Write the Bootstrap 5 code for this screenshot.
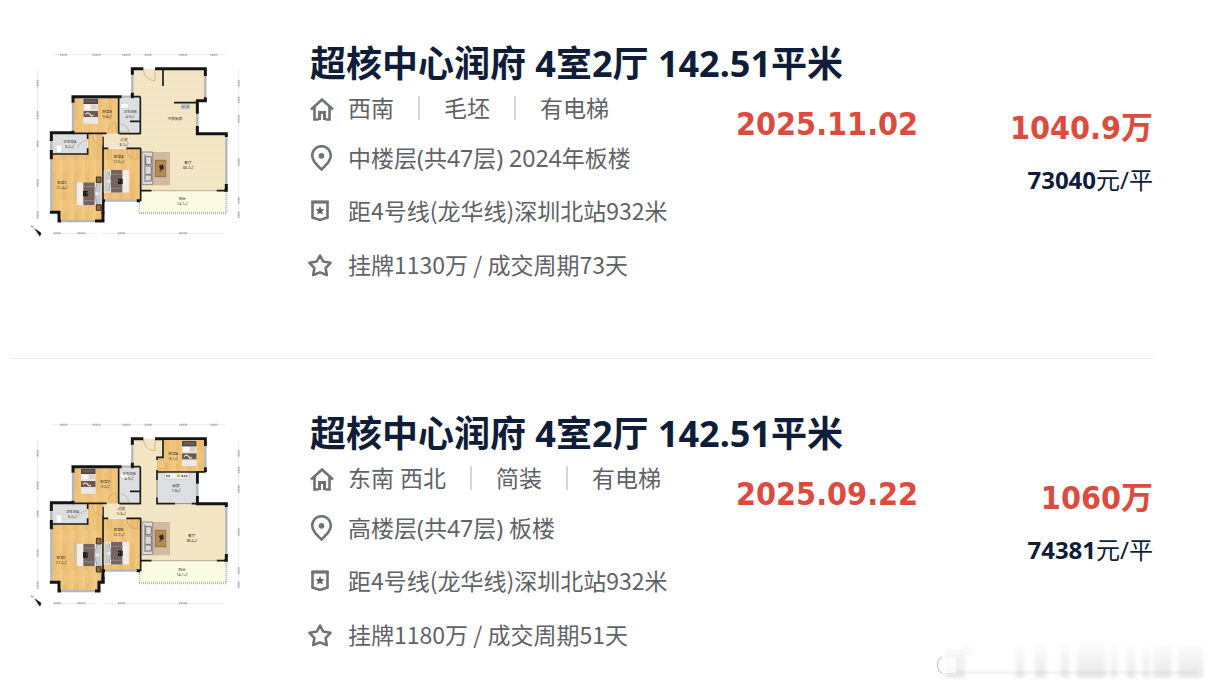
<!DOCTYPE html>
<html lang="zh-CN">
<head>
<meta charset="utf-8">
<meta name="viewport" content="width=device-width, initial-scale=1">
<title>超核中心润府 成交记录</title>
<link href="https://cdn.jsdelivr.net/npm/bootstrap@5.3.0/dist/css/bootstrap.min.css" rel="stylesheet">
<style>
  :root { --ink: #0f1d38; --soft: #5f6266; --deal: #db4c3f; }
  body { font-family: "Noto Sans", "Noto Sans CJK SC", sans-serif; color: var(--ink); background: #fff; }
  .deal-list { padding: 0 62px 0 10px; }
  .deal { padding: 55px 0 66px; border-bottom: 1px solid #ececec; }
  .deal:first-child { padding-top: 44px; }
  .deal:last-child { border-bottom: 0; padding-bottom: 0; }
  .plan-col { width: 298px; padding-left: 15px; }
  .plan { width: 220px; height: 205px; display: block; margin-top: -4px; }
  .deal-title { font-size: 36px; line-height: 40px; font-weight: 700; padding-left: 2px; }
  .facts li { height: 54px; gap: 14px; font-size: 23px; line-height: 32px; color: var(--soft); }
  .facts li:first-child { height: 47px; }
  .facts li:nth-child(2) { height: 53px; }
  .facts .plain-num { font-family: "Noto Sans CJK SC", sans-serif; padding-bottom: 2px; }
  .ico { width: 26px; height: 26px; fill: none; stroke: #707376; stroke-width: 2.6; }
  .sep { width: 2px; height: 24px; background: #d6d6d6; margin: 0 24px; }
  .info-col { width: 428px; }
  .date-col { padding-top: 60px; }
  .price-col { padding-top: 64px; }
  .big-num { font: 700 32px/40px "DejaVu Sans Condensed", "Noto Sans CJK SC", sans-serif; color: var(--deal); }
  .unit { font-size: 24px; line-height: 40px; margin-top: 12px; }
  .stamp { right: 10px; bottom: 8px; width: 270px; height: 44px; }
  .wall { fill: none; stroke: #141414; stroke-width: 9; }
  .thin { fill: none; stroke: #1b1b1b; stroke-width: 5; }
  .win { fill: none; stroke: #b3b6ba; stroke-width: 7; }
  .door { fill: none; stroke: #c6a36b; stroke-width: 2; }
  .room { font-size: 11px; fill: #3a3026; text-anchor: middle; }
  .dims { fill: none; stroke: #e2e2e2; stroke-width: 2; }
  .ticks { fill: none; stroke: #b4b4b4; stroke-width: 6; stroke-dasharray: 4 1; }
</style>
</head>
<body class="position-relative min-vh-100">

<svg class="position-absolute" width="0" height="0" aria-hidden="true">
  <defs>
    <pattern id="wood" width="34" height="120" patternUnits="userSpaceOnUse">
      <rect width="34" height="120" fill="#efc47c"/><rect width="11" height="70" fill="#f3cb86"/><rect x="11" y="40" width="11" height="80" fill="#ebbd72"/><path d="M0 0V120M11 0V120M22 0V120M0 70h11M22 35h12" stroke="#e3b368" fill="none"/>
    </pattern>
    <pattern id="tile" width="24" height="24" patternUnits="userSpaceOnUse">
      <rect width="24" height="24" fill="#f3e6c4"/><path d="M0 0H24M0 0V24" stroke="#ecdcb6" fill="none"/>
    </pattern>
    <pattern id="bath" width="12" height="12" patternUnits="userSpaceOnUse">
      <rect width="12" height="12" fill="#dde0e2"/><path d="M0 0H12M0 0V12" stroke="#d0d4d7" fill="none"/>
    </pattern>
  </defs>
  <symbol id="bed" viewBox="0 0 44 76">
    <rect width="44" height="76" fill="#e9e4de"/><rect width="44" height="17" fill="#4d4340"/><rect x="4" y="4" width="36" height="9" fill="#6a5c58"/>
    <rect x="4" y="19" width="16" height="13" fill="#fff"/><rect x="24" y="19" width="16" height="13" fill="#d9d0c8"/>
    <rect y="38" width="44" height="18" fill="#6a5853"/><path d="M6 48q8-9 14 0 4 8 10 2" stroke="#e8ddd4" stroke-width="4" fill="none"/>
    <rect y="60" width="44" height="16" fill="#ece8e4"/>
  </symbol>
  <symbol id="bedside" viewBox="0 0 76 68">
    <rect width="76" height="68" fill="#f1ede8"/><rect width="12" height="68" fill="#ddd6cf"/><rect x="22" width="34" height="68" fill="#75645d"/>
    <path d="M22 13h34M22 55h34" stroke="#94857d" stroke-width="3"/><path d="M43 28h12v12h-10v-8M50 26v16" stroke="#1b1717" stroke-width="4" fill="none"/>
    <rect x="4" y="5" width="14" height="25" fill="#c3cbcf"/><rect x="4" y="38" width="14" height="25" fill="#c3cbcf"/><path d="M16 3l6 30-6 32" stroke="#8d8883" stroke-width="2" fill="none"/>
  </symbol>
  <symbol id="plan-base" viewBox="0 0 660 615">
    <path d="M322 86H541V180H517V281H604V451H348V324H234V281H348V172H322Z" fill="url(#tile)"/>
    <path d="M147 172H281V281H234V541H102V517H80V342H188V281H147ZM234 326H346V480H234Z" fill="url(#wood)"/>
    <path d="M283 172H346V281H283ZM80 281H188V342H80Z" fill="url(#bath)"/>
    <path d="M346 453H604V518H346Z" fill="#fbfae2"/>
    <path d="M342 519H604V453" fill="none" stroke="#b9b9b9" stroke-width="7" stroke-dasharray="3 3"/>
    <path d="M343 480V520" fill="none" stroke="#b9b9b9" stroke-width="4" stroke-dasharray="3 3"/>
    <path class="win" d="M322 100V165M541 108V172M144 188V272M79 303V330M79 358V512M108 543H210M240 482H335M517 221V258M604 290V432M290 170H318"/>
    <path class="wall" d="M322 104V86H355M390 86H541V108M541 172V182H517V221M517 258V281H604V291M604 432V451H598M322 158V170H318M290 170H144V188M79 303V278H112M144 272V278H112M79 330V358M79 512V517H102V543H108M234 520V482H240M335 482H345"/>
    <path class="thin" d="M281 172V281M283 281H346M346 170V283M315 244H346M144 280H245M188 281V297M188 325V342H82M234 290V485M234 325H250M304 325H348M347 325V484M347 452H380M575 452H604M322 170H346"/>
    <path d="M380 452H575" stroke="#baa98e" stroke-width="3"/>
    <path d="M356 86V93C359 111 371 121 390 122V88" class="door"/>
    <path class="door" d="M250 272q2-20 24-24v30M202 286q2 27 30 30V286M158 325q4-20 28-24M305 330q4 24 32 27V328M285 276h26q-2-20-24-24"/>
    <rect x="287" y="191" width="23" height="13" rx="3" fill="#fff" stroke="#b9bdc0"/><rect x="94" y="315" width="16" height="22" rx="3" fill="#fff" stroke="#b9bdc0"/>
    <rect x="383" y="336" width="52" height="100" fill="#d2baa0"/><rect x="391" y="361" width="31" height="49" fill="#b48b51" stroke="#967442" stroke-width="3"/>
    <path d="M403 378l10-4 3 12-9 4ZM402 393h9" fill="#362b20" stroke="#362b20" stroke-width="2"/>
    <path d="M351 336h32v98h-32Z" fill="#dcd9d8" stroke="#8f8987" stroke-width="3"/><path d="M360 344v82M362 350h17v24h-17ZM362 378h17v25h-17M362 405h17v18h-17" fill="none" stroke="#77706e" stroke-width="3"/>
    <path class="dims" d="M82 44H600M84 580H208M232 580H598M38 90V535M641 90V535"/>
    <path class="ticks" d="M105 44h22M202 44h24M292 44h24M359 44h22M463 44h24M556 44h22M86 580h22M157 580h24M279 580h22M462 580h24M38 120v22M38 214v24M38 302v20M38 418v22M38 514v22M641 120v22M641 170v20M641 226v22M641 355v22M641 472v20M641 515v20"/>
    <path d="M28 564l21 15-4 11Z" fill="#151515"/><path d="M29 567l13 20M19 556v7M24 556v7M19 556l5 7" stroke="#777" stroke-width="1.5"/>
  </symbol>
  <symbol id="i-home" viewBox="0 0 26 26"><path d="M3 14.5 14 4.5 25 14.5M6.500 12V24.500H10.500M21.500 12V24.500H17.500"/><path d="M11.500 25V17.500H16.500V25" stroke-width="3"/></symbol>
  <symbol id="i-pin" viewBox="0 0 26 26"><path d="M13.500 24.500C8 19 4.200 15.500 4.200 10.500a9.300 9.300 0 0 1 18.600 0C22.800 15.500 19 19 13.500 24.500Z"/><circle cx="13.500" cy="10.800" r="1.600" fill="#707376"/></symbol>
  <symbol id="i-metro" viewBox="0 0 26 26"><path d="M4.500 4H19.500V19.500L12 22 4.500 19.500Z"/><path d="M3.500 4H20.500" stroke-width="3"/><path d="M12 8l1.300 2.900 3.200.3-2.400 2.100.7 3.200L12 14.900 9.200 16.500l.7-3.200-2.400-2.100 3.200-.3Z" fill="#606366" stroke="none"/></symbol>
  <symbol id="i-star" viewBox="0 0 26 26"><path d="M12 3.500 15.200 9.500 22.500 10.800 17.600 16.200 18.800 23 12 20.400 5.200 23 6.400 16.200 1.500 10.800 8.800 9.500Z" stroke-linejoin="round"/></symbol>
</svg>

<main class="deal-list">
  <article class="deal d-flex">
    <div class="plan-col flex-shrink-0">
      <svg class="plan" viewBox="0 0 660 615" role="img" aria-label="户型图">
        <use href="#plan-base" width="660" height="615"/>
        <path class="thin" d="M414 88V138M447 188H517"/>
        <path class="wall" d="M210 543H234V515"/>
        <rect x="467" y="192" width="29" height="16" fill="#c5ccd2"/><path d="M471 200h8M484 200h8" stroke="#7b858d" stroke-width="5"/>
        <rect x="147" y="420" width="12" height="58" fill="#d4be9e"/>
        <use href="#bed" x="175" y="175" width="44" height="76"/>
        <use href="#bedside" x="236" y="390" width="76" height="68"/>
        <use href="#bedside" x="-231" y="427" width="76" height="68" transform="scale(-1 1)"/>
        <path d="M214 411h14v17h-14ZM214 494h14v17h-14Z" fill="#8a6b3e" stroke="#3e3123" stroke-width="3"/>
        <g class="room">
          <text x="246" y="218">卧室B</text><text x="246" y="233">9.8㎡</text>
          <text x="450" y="239">开放厨房</text>
          <text x="315" y="220">卫生间B</text><text x="315" y="235">4.9㎡</text>
          <text x="297" y="302">过道</text><text x="297" y="317">8.2㎡</text>
          <text x="134" y="309">卫生间A</text><text x="134" y="324">6.2㎡</text>
          <text x="111" y="432">卧室C</text><text x="111" y="447">21.4㎡</text>
          <text x="281" y="353">卧室A</text><text x="281" y="368">12.5㎡</text>
          <text x="489" y="373">客厅</text><text x="489" y="388">38.2㎡</text>
          <text x="472" y="481">阳台</text><text x="472" y="496">14.1㎡</text>
        </g>
      </svg>
    </div>
    <div class="info-col flex-shrink-0">
      <h2 class="deal-title text-nowrap mb-0">超核中心润府 4室2厅 142.51平米</h2>
      <ul class="facts list-unstyled mb-0 text-nowrap">
        <li class="d-flex align-items-center"><svg class="ico"><use href="#i-home"/></svg><span class="d-flex align-items-center">西南<i class="sep"></i>毛坯<i class="sep"></i>有电梯</span></li>
        <li class="d-flex align-items-center"><svg class="ico"><use href="#i-pin"/></svg><span>中楼层(共47层) 2024年板楼</span></li>
        <li class="d-flex align-items-center"><svg class="ico"><use href="#i-metro"/></svg><span class="plain-num">距4号线(龙华线)深圳北站932米</span></li>
        <li class="d-flex align-items-center"><svg class="ico"><use href="#i-star"/></svg><span class="plain-num">挂牌1130万 / 成交周期73天</span></li>
      </ul>
    </div>
    <div class="date-col"><time class="big-num d-block" datetime="2025-11-02">2025.11.02</time></div>
    <div class="price-col ms-auto text-end text-nowrap">
      <div class="big-num">1040.9万</div>
      <div class="unit"><b>73040</b>元/平</div>
    </div>
  </article>

  <article class="deal d-flex">
    <div class="plan-col flex-shrink-0">
      <svg class="plan" viewBox="0 0 660 615" role="img" aria-label="户型图">
        <use href="#plan-base" width="660" height="615"/>
        <path d="M226 520h10v24h-10Z" fill="#fff"/>
        <path class="wall" d="M210 543H222V517H234V500"/>
        <path d="M414 90H537V184H396V143H414Z" fill="url(#wood)"/><path d="M396 188H513V281H396Z" fill="url(#bath)"/>
        <path class="thin" d="M414 88V142H396V150M396 180V186H540M396 188V210M396 262V281H450M500 281H517"/>
        <path d="M396 210V262M450 281H500" stroke="#888" stroke-width="3"/>
        <path class="door" d="M398 146q26 3 28 30H398"/>
        <rect x="418" y="189" width="74" height="18" fill="#f3f3ee" stroke="#aaa"/><path d="M423 198h14M469 198h18" stroke="#777" stroke-width="6" stroke-dasharray="5 2"/><circle cx="460" cy="197" r="5" fill="#d2bb3e"/>
        <rect x="145" y="395" width="14" height="58" fill="#d4be9e"/>
        <use href="#bed" x="471" y="92" width="44" height="76"/>
        <use href="#bed" x="168" y="175" width="44" height="76"/>
        <use href="#bedside" x="236" y="396" width="76" height="68"/>
        <use href="#bedside" x="-231" y="401" width="76" height="68" transform="scale(-1 1)"/>
        <path d="M214 385h14v17h-14ZM214 469h14v17h-14Z" fill="#8a6b3e" stroke="#3e3123" stroke-width="3"/>
        <g class="room">
          <text x="241" y="219">卧室D</text><text x="241" y="234">9.2㎡</text>
          <text x="445" y="136">卧室A</text><text x="445" y="151">9.1㎡</text>
          <text x="453" y="231">厨房</text><text x="453" y="246">7.8㎡</text>
          <text x="312" y="195">卫生间B</text><text x="312" y="210">4.9㎡</text>
          <text x="289" y="301">过道</text><text x="289" y="316">5.3㎡</text>
          <text x="142" y="308">卫生间A</text><text x="142" y="323">6.2㎡</text>
          <text x="109" y="446">卧室C</text><text x="109" y="461">21.2㎡</text>
          <text x="281" y="363">卧室B</text><text x="281" y="378">12.7㎡</text>
          <text x="500" y="382">客厅</text><text x="500" y="397">38.4㎡</text>
          <text x="471" y="482">阳台</text><text x="471" y="497">14.1㎡</text>
        </g>
      </svg>
    </div>
    <div class="info-col flex-shrink-0">
      <h2 class="deal-title text-nowrap mb-0">超核中心润府 4室2厅 142.51平米</h2>
      <ul class="facts list-unstyled mb-0 text-nowrap">
        <li class="d-flex align-items-center"><svg class="ico"><use href="#i-home"/></svg><span class="d-flex align-items-center">东南 西北<i class="sep"></i>简装<i class="sep"></i>有电梯</span></li>
        <li class="d-flex align-items-center"><svg class="ico"><use href="#i-pin"/></svg><span>高楼层(共47层) 板楼</span></li>
        <li class="d-flex align-items-center"><svg class="ico"><use href="#i-metro"/></svg><span class="plain-num">距4号线(龙华线)深圳北站932米</span></li>
        <li class="d-flex align-items-center"><svg class="ico"><use href="#i-star"/></svg><span class="plain-num">挂牌1180万 / 成交周期51天</span></li>
      </ul>
    </div>
    <div class="date-col"><time class="big-num d-block" datetime="2025-09-22">2025.09.22</time></div>
    <div class="price-col ms-auto text-end text-nowrap">
      <div class="big-num">1060万</div>
      <div class="unit"><b>74381</b>元/平</div>
    </div>
  </article>
</main>

<!-- faded stamp in the page corner -->
<svg class="stamp position-absolute" viewBox="0 0 270 44" aria-hidden="true">
  <defs>
    <linearGradient id="fade" x1="0" y1="0" x2="0" y2="1"><stop offset="0" stop-color="#999" stop-opacity="0"/><stop offset="1" stop-color="#999" stop-opacity=".22"/></linearGradient>
    <filter id="haze" x="-10%" y="-10%" width="120%" height="120%"><feGaussianBlur stdDeviation="2 1"/></filter>
  </defs>
  <g filter="url(#haze)" fill="url(#fade)">
    <path d="M10 12h20v29H10ZM29 3h8v15h-8ZM81 6h8v35h-8ZM100 6h11v35h-11ZM126 6h8v35h-8ZM142 4h29v37h-29ZM176 8h6v33h-6ZM192 8h8v33h-8ZM208 8h6v33h-6ZM218 8h19v33h-19ZM243 8h25v33h-25Z"/>
    <path d="M6 19h262v3H6ZM8 34h255v3H8Z" opacity=".6"/>
  </g>
  <path d="M7 20h14v16H7C1 34 1 22 7 20" fill="#fff" opacity=".7"/><path d="M7 20C1 22 1 34 7 36" fill="none" stroke="#bbb"/>
</svg>
<script src="https://cdn.jsdelivr.net/npm/bootstrap@5.3.0/dist/js/bootstrap.bundle.min.js"></script>
</body>
</html>
